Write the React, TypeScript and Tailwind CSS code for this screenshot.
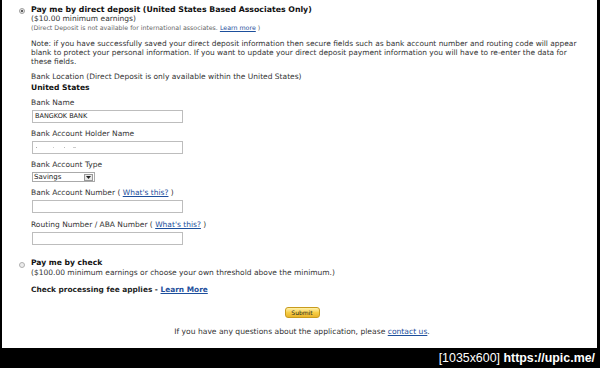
export default function App() {
  const label = "text-[7.5px] leading-[10px] text-[#333] whitespace-nowrap";
  const input = "w-[151px] h-[13px] border border-[#bdbdbd] bg-white";
  const link = "text-[#1d4f9c] underline";

  return (
    <div className="w-[600px] h-[368px] bg-black flex flex-col" style={{ fontFamily: '"DejaVu Sans", Verdana, sans-serif' }}>
      <div className="ml-[2px] w-[595px] h-[348px] bg-white flex">
        {/* radio column */}
        <div className="w-[29px] flex flex-col items-end pr-[6px]">
          <div className="mt-[8px] w-[6px] h-[6px] rounded-full border border-[#a0a0a0] bg-[#e4e4e4] flex items-center justify-center">
            <div className="w-[2px] h-[2px] rounded-full bg-[#333]" />
          </div>
          <div className="mt-[248px] w-[6px] h-[6px] rounded-full border border-[#b0b0b0] bg-[#ececec]" />
        </div>

        <div className="flex-1 pt-[5px] flex flex-col">
          <div className="text-[7.8px] leading-[9px] font-bold text-[#111] whitespace-nowrap">
            Pay me by direct deposit (United States Based Associates Only)
          </div>
          <div className="text-[7.5px] leading-[9px] text-[#333]">($10.00 minimum earnings)</div>
          <div className="text-[6.3px] leading-[9px] text-[#666] whitespace-nowrap">
            (Direct Deposit is not available for international associates. <span className={link}>Learn more</span> )
          </div>

          <div className="mt-[7px] text-[7.45px] leading-[9px] text-[#333] whitespace-nowrap">
            Note: if you have successfully saved your direct deposit information then secure fields such as bank account number and routing code will appear
            <br />
            blank to protect your personal information. If you want to update your direct deposit payment information you will have to re-enter the data for
            <br />
            these fields.
          </div>

          <div className={`mt-[6px] ${label}`}>Bank Location (Direct Deposit is only available within the United States)</div>
          <div className="mt-[1px] text-[7.6px] leading-[10px] font-bold text-[#111]">United States</div>

          <div className={`mt-[5px] ${label}`}>Bank Name</div>
          <div className={`mt-[2px] ml-[1px] ${input} flex items-center pl-[2px] text-[6.5px] text-[#222]`}>BANGKOK BANK</div>

          <div className={`mt-[6px] ${label}`}>Bank Account Holder Name</div>
          <div className={`mt-[2px] ml-[1px] ${input} flex items-center gap-[4px] pl-[3px]`}>
            <span className="w-[1px] h-[1px] bg-[#aaa]" />
            <span className="w-[1px] h-[1px] bg-[#ccc] ml-[12px]" />
            <span className="w-[1px] h-[1px] bg-[#bbb] ml-[6px]" />
            <span className="w-[3px] h-[1px] bg-[#ccc] ml-[4px]" />
          </div>

          <div className={`mt-[6px] ${label}`}>Bank Account Type</div>
          <div className="mt-[2px] ml-[1px] w-[63px] h-[10px] border border-[#aaa] bg-white flex items-center justify-between">
            <span className="pl-[1px] text-[7px] leading-[8px] text-[#222]">Savings</span>
            <span className="mr-[1px] w-[9px] h-[7px] border border-[#999] bg-[#e8e8e8] flex items-center justify-center">
              <svg width="5" height="3" viewBox="0 0 5 3"><path d="M0 0h5L2.5 3z" fill="#222" /></svg>
            </span>
          </div>

          <div className={`mt-[6px] ${label}`}>
            Bank Account Number ( <span className={link}>What's this?</span> )
          </div>
          <div className={`mt-[2px] ml-[1px] ${input}`} />

          <div className={`mt-[7px] ${label}`}>
            Routing Number / ABA Number ( <span className={link}>What's this?</span> )
          </div>
          <div className={`mt-[2px] ml-[1px] ${input}`} />

          <div className="mt-[13px] text-[7.6px] leading-[9px] font-bold text-[#111]">Pay me by check</div>
          <div className="mt-[1px] text-[7.5px] leading-[10px] text-[#333] whitespace-nowrap">
            ($100.00 minimum earnings or choose your own threshold above the minimum.)
          </div>

          <div className="mt-[7px] text-[7.4px] leading-[10px] font-bold text-[#222] whitespace-nowrap">
            Check processing fee applies - <span className={link}>Learn More</span>
          </div>

          <div className="mt-[12px] flex justify-center pr-[24px]">
            <div className="w-[35px] h-[11px] rounded-[3px] border border-[#c89b1e] bg-gradient-to-b from-[#fff1a8] via-[#f7cf46] to-[#eab42a] flex items-center justify-center text-[6px] leading-[8px] text-[#222]">
              Submit
            </div>
          </div>

          <div className="mt-[9px] flex justify-center pr-[24px] text-[7.6px] leading-[10px] text-[#333] whitespace-nowrap">
            <span>
              If you have any questions about the application, please <span className={link}>contact us</span>.
            </span>
          </div>
        </div>
      </div>

      <div className="flex-1 flex items-center justify-end pr-[5px]">
        <span className="text-white text-[12.4px] leading-[14px]" style={{ fontFamily: '"Liberation Sans", sans-serif' }}>
          [1035x600] <span className="font-bold">https://upic.me/</span>
        </span>
      </div>
    </div>
  );
}
